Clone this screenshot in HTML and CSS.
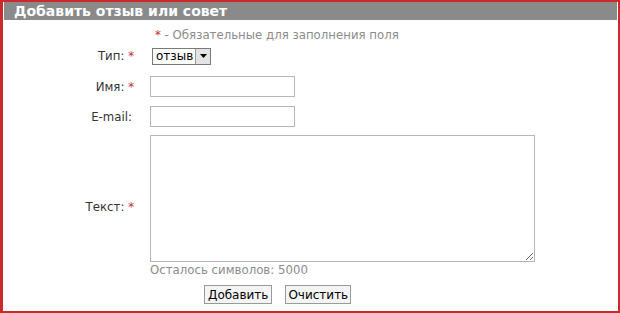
FILE: index.html
```html
<!DOCTYPE html>
<html lang="ru">
<head>
<meta charset="utf-8">
<title>Добавить отзыв или совет</title>
<link rel="stylesheet" href="styles.css">
</head>
<body>
<div class="frame">
  <div class="header">Добавить отзыв или совет</div>
  <form class="form">
    <div class="note"><span class="req">*</span> - Обязательные для заполнения поля</div>
    <div class="row row-type">
      <label class="label">Тип: <span class="req">*</span></label>
      <div class="select">
        <span class="select-value">отзыв</span>
        <span class="select-btn"><svg width="7" height="4" viewBox="0 0 7 4"><path d="M0 0H7L3.5 4Z" fill="#000"/></svg></span>
      </div>
    </div>
    <div class="row row-name">
      <label class="label">Имя: <span class="req">*</span></label>
      <input class="input" type="text">
    </div>
    <div class="row row-mail">
      <label class="label">E-mail:</label>
      <input class="input" type="text">
    </div>
    <div class="row row-text">
      <label class="label">Текст: <span class="req">*</span></label>
      <textarea class="textarea"></textarea>
    </div>
    <div class="counter">Осталось символов: 5000</div>
    <div class="buttons">
      <button type="button" class="btn">Добавить</button>
      <button type="button" class="btn">Очистить</button>
    </div>
  </form>
</div>
</body>
</html>
```
FILE: styles.css
```css
html, body {
  margin: 0;
  padding: 0;
  background: #fff;
}
body {
  font-family: "DejaVu Sans", Verdana, sans-serif;
  font-size: 11.75px;
  color: #333;
}
.frame {
  width: 620px;
  height: 313px;
  box-sizing: border-box;
  border: 2px solid #cc2a2a;
  border-left-width: 3px;
  padding: 0 1px 0 1px;
}
.header {
  height: 18px;
  line-height: 18px;
  background: #8a8a8a;
  color: #fff;
  font-weight: bold;
  font-size: 14px;
  padding-left: 10px;
}
.form {
  display: flex;
  flex-direction: column;
}
.note {
  margin-top: 7px;
  padding-left: 151px;
  color: #8c8c8c;
  height: 16px;
  line-height: 16px;
}
.req {
  color: #c0303a;
}
.row {
  display: grid;
  grid-template-columns: 130px auto;
  column-gap: 16px;
  align-items: center;
}
.label {
  text-align: right;
  white-space: nowrap;
}
.row-type {
  margin-top: 3px;
  height: 20px;
}
.row-name {
  margin-top: 10px;
}
.row-mail {
  margin-top: 9px;
}
.row-mail .label {
  padding-right: 2px;
}
.row-text {
  margin-top: 8px;
}
.row-text .label {
  padding-top: 16px;
}
.select {
  display: flex;
  align-items: stretch;
  width: 59px;
  height: 17px;
  border: 1px solid #7a7a7a;
  margin-left: 2px;
  box-sizing: border-box;
  background: #fff;
}
.select-value {
  flex: 1;
  font-size: 12px;
  line-height: 15px;
  padding-left: 3px;
  color: #000;
}
.select-btn {
  width: 14px;
  display: flex;
  align-items: center;
  justify-content: center;
  background: #e4e4e4;
  border-left: 1px solid #9a9a9a;
}
.input {
  width: 145px;
  height: 21px;
  box-sizing: border-box;
  border: 1px solid #b5b5b5;
  margin: 0;
  padding: 0;
  font: inherit;
}
.textarea {
  width: 385px;
  height: 127px;
  box-sizing: border-box;
  border: 1px solid #b5b5b5;
  margin: 0;
  padding: 0;
  font: inherit;
  resize: both;
}
.counter {
  margin-top: 0;
  padding-left: 146px;
  color: #8c8c8c;
  height: 16px;
  line-height: 16px;
}
.buttons {
  display: flex;
  gap: 13px;
  padding-left: 200px;
  margin-top: 7px;
}
.btn {
  font-family: "DejaVu Sans", Verdana, sans-serif;
  font-size: 12px;
  color: #000;
  height: 19px;
  padding: 0 3px;
  background: #f4f4f4;
  border: 1px solid #9a9a9a;
  border-radius: 0;
  line-height: 16px;
}
.btn + .btn {
  padding: 0 2px;
}
```
